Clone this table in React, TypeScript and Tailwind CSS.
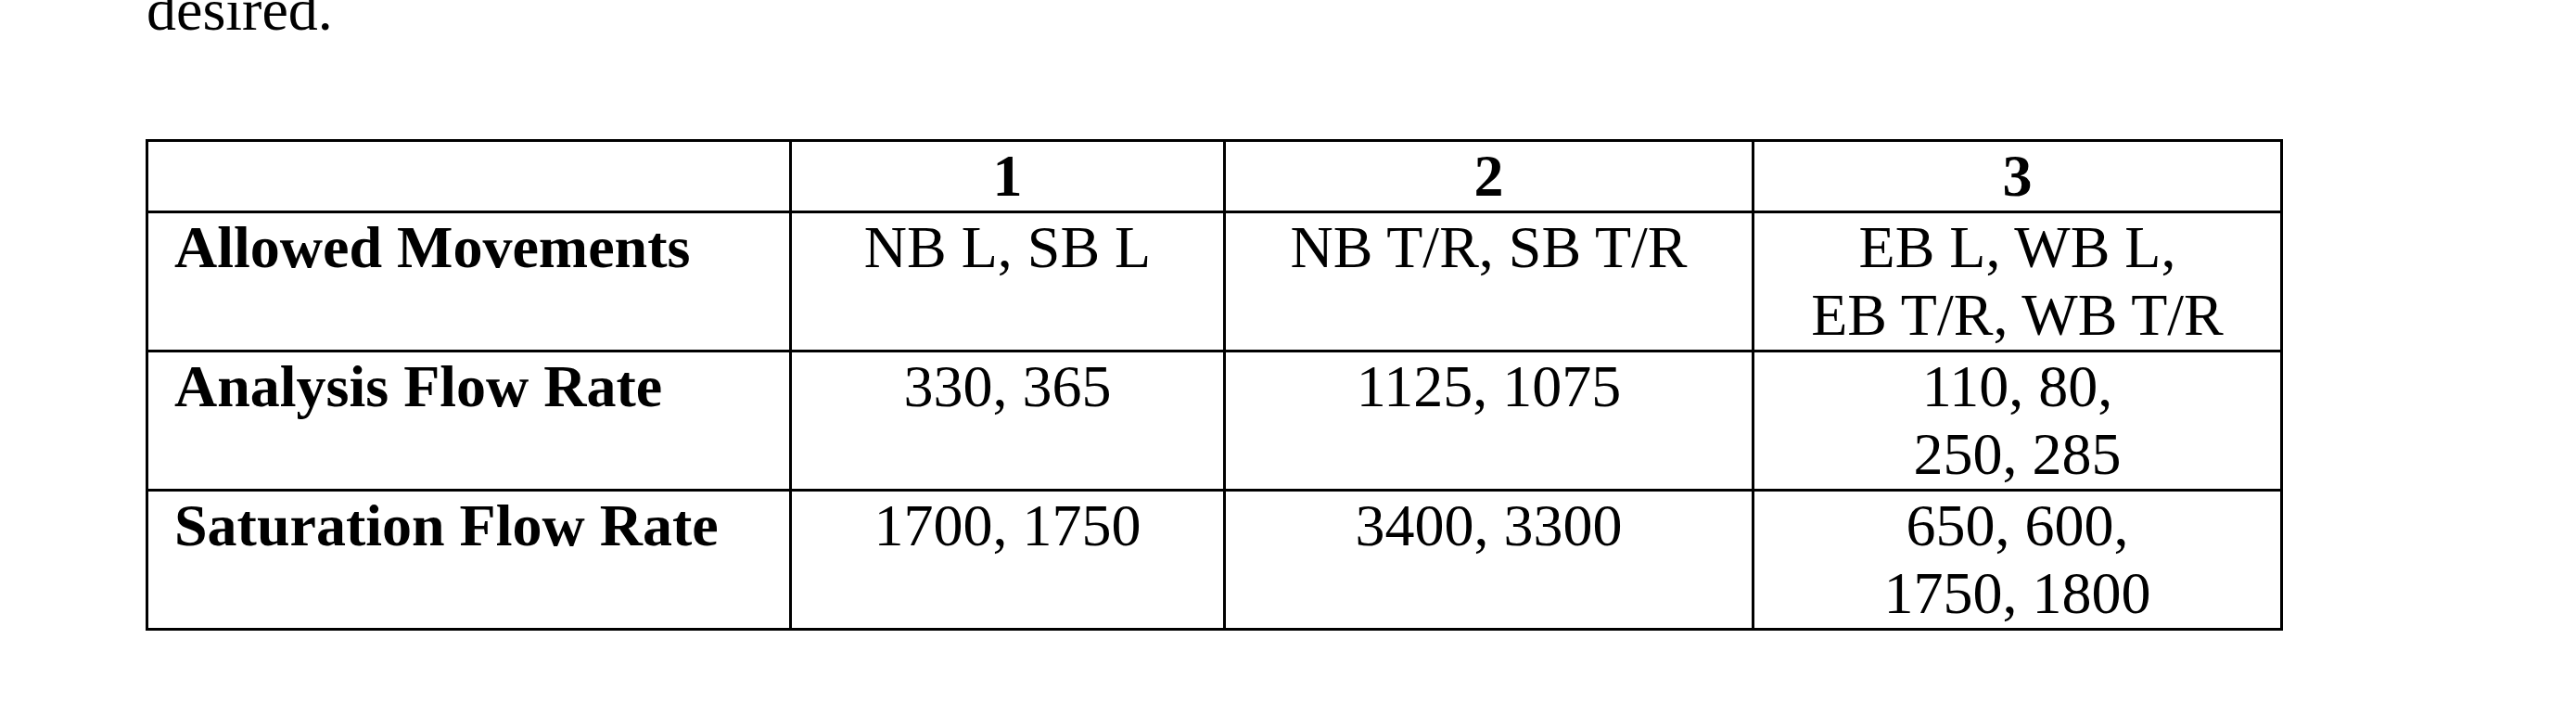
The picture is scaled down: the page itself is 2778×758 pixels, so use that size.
const COLUMNS = ['1', '2', '3']

type Row = {
  label: string
  cells: string[][]
}

const ROWS: Row[] = [
  {
    label: 'Allowed Movements',
    cells: [['NB L, SB L'], ['NB T/R, SB T/R'], ['EB L, WB L,', 'EB T/R, WB T/R']],
  },
  {
    label: 'Analysis Flow Rate',
    cells: [['330, 365'], ['1125, 1075'], ['110, 80,', '250, 285']],
  },
  {
    label: 'Saturation Flow Rate',
    cells: [['1700, 1750'], ['3400, 3300'], ['650, 600,', '1750, 1800']],
  },
]

const cell = 'border-r-[3px] border-b-[3px] border-black'

export default function App() {
  return (
    <div className="min-h-screen w-full overflow-hidden bg-white pl-[157px] text-black text-[64px] leading-[73.5px] font-['Liberation_Serif','Times_New_Roman',serif]">
      {/* tail of the previous paragraph, cut by the top edge */}
      <p className="-mt-[26px] pl-[1px]">desired.</p>

      <div className="mt-[102.5px] grid w-max grid-cols-[694px_468px_570px_570px] border-l-[3px] border-t-[3px] border-black">
        {/* header row */}
        <div className={cell} />
        {COLUMNS.map((c) => (
          <div key={c} className={`${cell} text-center font-bold`}>
            {c}
          </div>
        ))}

        {ROWS.map((row) => (
          <div key={row.label} className="contents">
            <div className={`${cell} pl-[28px] font-bold`}>{row.label}</div>
            {row.cells.map((lines, i) => (
              <div key={i} className={`${cell} text-center`}>
                {lines.map((line) => (
                  <div key={line}>{line}</div>
                ))}
                {lines.length === 1 && <div>&nbsp;</div>}
              </div>
            ))}
          </div>
        ))}
      </div>
    </div>
  )
}
